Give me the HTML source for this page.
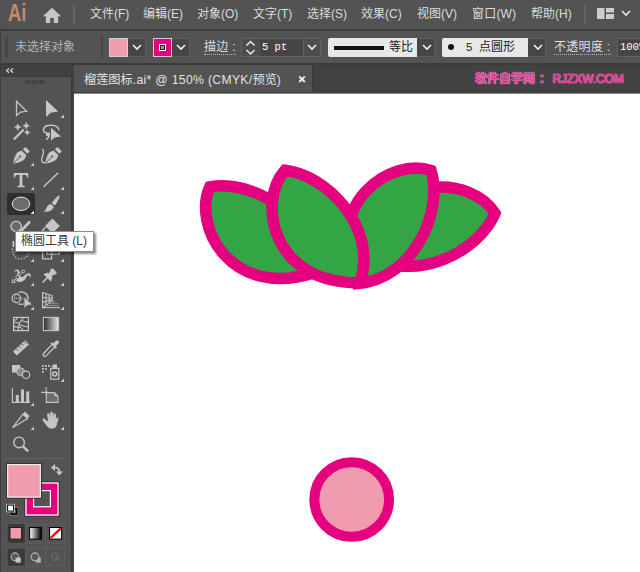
<!DOCTYPE html>
<html lang="zh-CN">
<head>
<meta charset="utf-8">
<title>榴莲图标.ai</title>
<style>
html,body{margin:0;padding:0;}
body{width:640px;height:572px;position:relative;overflow:hidden;background:#fff;font-family:"Liberation Sans","Noto Sans CJK SC",sans-serif;font-size:12px;color:#d8d8d8;}
.abs{position:absolute;}
#menubar{left:0;top:0;width:640px;height:29px;background:#535353;}
#menubar .mi{position:absolute;top:5px;height:19px;line-height:19px;font-size:12px;color:#dcdcdc;white-space:nowrap;}
#sep1{left:0;top:29px;width:640px;height:2px;background:#3e3e3e;}
#ctrl{left:0;top:31px;width:640px;height:32px;background:#535353;}
#sep2{left:0;top:63px;width:640px;height:2px;background:#3b3b3b;}
#tabrow{left:71px;top:65px;width:569px;height:27px;background:#424242;border-left:0}
#tabline{left:74px;top:92px;width:566px;height:1px;background:#3f3f3f;border-bottom:1px solid #8a8a8a;}
#tab{left:74px;top:65px;width:238px;height:27px;background:#535353;border-right:1px solid #3a3a3a;}
#tabtxt{left:84px;top:71px;height:18px;line-height:18px;font-size:12.2px;color:#e2e2e2;white-space:nowrap;}
#tabtxt .ls{letter-spacing:.32px;}
#gap{left:71px;top:65px;width:2px;height:507px;background:#3b3b3b;border-right:1px solid #474747;}
#tools{left:0;top:65px;width:71px;height:507px;background:#535353;}
#toolhead{left:0;top:65px;width:71px;height:11px;background:#404040;}
#toolsep{left:0;top:76px;width:71px;height:1px;background:#3b3b3b;}
#lb{left:0;top:31px;width:1px;height:541px;background:#3e3e3e;}
.lbl{position:absolute;white-space:nowrap;font-size:12px;color:#dedede;}
.dd{position:absolute;top:38px;height:17px;background:#464646;border:1px solid #5e5e5e;border-left:0;border-radius:0 2px 2px 0;box-sizing:content-box;}
.field{position:absolute;top:38px;height:19px;}
#wm span{font-weight:normal;-webkit-text-stroke:.6px #e5389a;margin-left:5.5px;letter-spacing:-.1px}
#wm{left:475px;top:69px;height:20px;line-height:20px;font-size:12px;font-weight:bold;color:#e5389a;white-space:nowrap;text-shadow:0 0 1px #f6b3d6,0 0 1px #f6b3d6;}
#tip{left:15px;top:231px;width:77px;height:19px;background:#fff;border:1px solid #8c8c8c;box-shadow:2px 2px 2px rgba(0,0,0,.45);color:#3c3c3c;font-size:12px;line-height:19px;white-space:nowrap;}
#tip span{position:absolute;left:5px;top:0;}
</style>
</head>
<body>
<!-- canvas artwork -->
<svg class="abs" style="left:74px;top:94px" width="566" height="478" viewBox="74 94 566 478">
<g fill="#33a544" stroke="#e4007f" stroke-width="11.5" stroke-linejoin="miter" stroke-miterlimit="10">
<path id="leaf4" d="M495.0 213.3 C473.4 177.9 390.2 167.1 365.7 252.8 C413.8 286.6 479.4 251.1 495.0 213.3 Z"/>
<path id="leaf3" d="M431.0 170.4 C391.7 157.0 320.8 202.1 357.1 283.6 C415.6 278.7 443.2 209.4 431.0 170.4 Z"/>
<path id="leaf1" d="M209.9 186.8 C192.3 224.4 229.3 299.8 314.3 272.8 C315.8 214.1 250.0 178.9 209.9 186.8 Z"/>
<path id="leaf2" d="M284.9 170.3 C257.2 201.2 270.9 284.1 360.1 282.7 C378.5 226.9 325.6 174.3 284.9 170.3 Z"/>
</g>
<circle cx="351.7" cy="499.5" r="37.35" fill="#f19cae" stroke="#e4007f" stroke-width="10"/>
</svg>

<div id="menubar" class="abs">
<div class="abs" style="left:8px;top:0px;font-size:23.5px;font-weight:bold;color:#c08c69;line-height:27px;transform:scaleX(.78);transform-origin:0 0;">Ai</div>
<svg class="abs" style="left:42px;top:7px" width="20" height="17" viewBox="0 0 20 17"><path d="M10 .8 L19.2 9.2 H16.2 V16 H11.8 V11 H8.2 V16 H3.8 V9.2 H.8Z" fill="#c6c6c6"/></svg>
<div class="abs" style="left:73px;top:5px;width:2px;height:19px;background:#646464"></div>
<div class="mi" style="left:90px">文件(F)</div>
<div class="mi" style="left:143px">编辑(E)</div>
<div class="mi" style="left:197px">对象(O)</div>
<div class="mi" style="left:253px">文字(T)</div>
<div class="mi" style="left:307px">选择(S)</div>
<div class="mi" style="left:361px">效果(C)</div>
<div class="mi" style="left:417px">视图(V)</div>
<div class="mi" style="left:472px;letter-spacing:.2px">窗口(W)</div>
<div class="mi" style="left:531px">帮助(H)</div>
<div class="abs" style="left:584px;top:5px;width:2px;height:19px;background:#646464"></div>
<svg class="abs" style="left:597px;top:8px" width="17" height="11"><rect x="0" y="0" width="7.5" height="11" fill="#cdcdcd"/><rect x="9" y="0" width="8" height="4.5" fill="#cdcdcd"/><rect x="9" y="6" width="8" height="5" fill="#cdcdcd"/></svg>
<svg class="abs" style="left:621px;top:10px" width="10" height="7"><path d="M1 1 L5 5 L9 1" fill="none" stroke="#e6e6e6" stroke-width="1.6"/></svg>
</div>
<div id="sep1" class="abs"></div>

<div id="ctrl" class="abs"></div>
<!-- control bar contents (absolute to page) -->
<svg class="abs" style="left:5px;top:38px" width="4" height="20"><g fill="#3c3c3c"><rect y="0" width="3" height="1"/><rect y="2" width="3" height="1"/><rect y="4" width="3" height="1"/><rect y="6" width="3" height="1"/><rect y="8" width="3" height="1"/><rect y="10" width="3" height="1"/><rect y="12" width="3" height="1"/><rect y="14" width="3" height="1"/><rect y="16" width="3" height="1"/><rect y="18" width="3" height="1"/></g></svg>
<div class="lbl" style="left:15px;top:38px;line-height:18px;color:#b4b4b4">未选择对象</div>
<div class="abs" style="left:101px;top:35px;width:2px;height:24px;background:#474747"></div>
<!-- fill swatch -->
<div class="abs" style="left:109px;top:38px;width:17px;height:17px;background:#f19cae;border:1px solid #cfcfcf"></div>
<div class="dd" style="left:128px;width:17px"></div>
<svg class="abs" style="left:132px;top:44px" width="10" height="7"><path d="M1 1 L5 5 L9 1" fill="none" stroke="#f0f0f0" stroke-width="1.6"/></svg>
<!-- stroke swatch -->
<div class="abs" style="left:153px;top:38px;width:17px;height:17px;background:#e4007f;border:1px solid #cfcfcf"></div>
<div class="abs" style="left:159px;top:44px;width:5px;height:5px;border:1px solid #fff;background:#222;box-shadow:inset 0 0 0 1px #222, inset 0 0 0 3px #999"></div>
<div class="dd" style="left:172px;width:17px"></div>
<svg class="abs" style="left:176px;top:44px" width="10" height="7"><path d="M1 1 L5 5 L9 1" fill="none" stroke="#f0f0f0" stroke-width="1.6"/></svg>
<div class="lbl" style="left:204px;top:38px;line-height:18px;letter-spacing:.3px">描边 :</div>
<div class="abs" style="left:204px;top:54px;width:32px;height:0;border-top:1px dotted #bdbdbd"></div>
<!-- spinner -->
<div class="abs" style="left:241px;top:38px;width:18px;height:17px;border:1px solid #636363;border-radius:2px 0 0 2px;background:#4d4d4d"></div>
<svg class="abs" style="left:245px;top:40px" width="11" height="16"><path d="M1.5 5.5 L5.5 1.5 L9.5 5.5 M1.5 10 L5.5 14 L9.5 10" fill="none" stroke="#ececec" stroke-width="1.5"/></svg>
<div class="abs" style="left:260px;top:38px;width:43px;height:17px;background:#454545;border:1px solid #636363;border-left:0"></div>
<div class="abs" style="left:262px;top:38px;line-height:19px;font-family:'Liberation Mono',monospace;font-size:10.5px;color:#fff;">5 pt</div>
<div class="dd" style="left:304px;width:16px;background:#4d4d4d;border-color:#636363"></div>
<svg class="abs" style="left:307px;top:44px" width="10" height="7"><path d="M1 1 L5 5 L9 1" fill="none" stroke="#f0f0f0" stroke-width="1.6"/></svg>
<!-- profile -->
<div class="abs" style="left:328px;top:38px;width:89px;height:19px;background:#e8e8e8;border-radius:2px 0 0 2px"></div>
<div class="abs" style="left:334px;top:46px;width:50px;height:4px;background:#111"></div>
<div class="abs" style="left:389px;top:38px;line-height:19px;font-size:12px;color:#222">等比</div>
<div class="dd" style="left:417px;width:17px"></div>
<svg class="abs" style="left:422px;top:44px" width="10" height="7"><path d="M1 1 L5 5 L9 1" fill="none" stroke="#f0f0f0" stroke-width="1.6"/></svg>
<!-- brush -->
<div class="abs" style="left:442px;top:38px;width:86px;height:19px;background:#e8e8e8;border-radius:2px 0 0 2px"></div>
<div class="abs" style="left:448px;top:44px;width:6px;height:6px;border-radius:3px;background:#111"></div>
<div class="abs" style="left:466px;top:38px;line-height:19px;font-size:12px;color:#222;white-space:nowrap"><span style="font-size:11.5px">5</span>&nbsp; 点圆形</div>
<div class="dd" style="left:528px;width:17px"></div>
<svg class="abs" style="left:533px;top:44px" width="10" height="7"><path d="M1 1 L5 5 L9 1" fill="none" stroke="#f0f0f0" stroke-width="1.6"/></svg>
<div class="lbl" style="left:554px;top:38px;line-height:18px;letter-spacing:.3px">不透明度 :</div>
<div class="abs" style="left:554px;top:54px;width:57px;height:0;border-top:1px dotted #bdbdbd"></div>
<div class="abs" style="left:617px;top:38px;width:30px;height:17px;background:#454545;border:1px solid #636363;border-radius:2px 0 0 2px"></div>
<div class="abs" style="left:620px;top:38px;line-height:19px;font-family:'Liberation Mono',monospace;font-size:10.5px;color:#fff;white-space:nowrap">100%</div>
<div id="sep2" class="abs"></div>

<div id="tabrow" class="abs"></div>
<div id="tabline" class="abs"></div>
<div id="tab" class="abs"></div>
<div id="tabtxt" class="abs">榴莲图标<span class="ls">.ai* @ 150% (CMYK/</span>预览<span class="ls">)</span></div>
<svg class="abs" style="left:298px;top:75px" width="8" height="8"><path d="M1.2 1.4 L6.8 7 M6.8 1.4 L1.2 7" stroke="#ededed" stroke-width="1.8" fill="none"/></svg>
<div id="wm" class="abs">软件自学网<i style="font-style:normal;position:relative;left:4px">：</i><span>RJZXW.COM</span></div>

<div id="tools" class="abs"></div>
<div id="toolhead" class="abs"></div>
<div id="toolsep" class="abs"></div>
<div id="gap" class="abs"></div>
<div id="lb" class="abs"></div>
<!--TOOLSVG_START--><svg class="abs" style="left:0;top:0" width="74" height="572" viewBox="0 0 74 572">
<defs>
<linearGradient id="gLR" x1="0" x2="1" y1="0" y2="0"><stop offset="0" stop-color="#2a2a2a"/><stop offset="1" stop-color="#e8e8e8"/></linearGradient>
<linearGradient id="gWB" x1="0" x2="1" y1="0" y2="0"><stop offset="0" stop-color="#ffffff"/><stop offset="1" stop-color="#000000"/></linearGradient>
<path id="tri" d="M3.5 0 V3.5 H0Z"/>
</defs>
<!-- header arrows + grip -->
<path d="M9 68.4 L6.6 70.6 L9 72.8 M13 68.4 L10.6 70.6 L13 72.8" fill="none" stroke="#d0d0d0" stroke-width="1.4"/>
<g fill="#3a3a3a"><rect x="26" y="80" width="1" height="4"/><rect x="28" y="80" width="1" height="4"/><rect x="30" y="80" width="1" height="4"/><rect x="32" y="80" width="1" height="4"/><rect x="34" y="80" width="1" height="4"/><rect x="36" y="80" width="1" height="4"/><rect x="38" y="80" width="1" height="4"/><rect x="40" y="80" width="1" height="4"/><rect x="42" y="80" width="1" height="4"/><rect x="44" y="80" width="1" height="4"/></g>
<!-- selected tool bg -->
<rect x="7" y="193" width="28" height="22" rx="2" fill="#2e2e2e"/>
<g fill="#c6c6c6" stroke="none">
<!-- corner triangles -->
<use href="#tri" x="60.5" y="114.5"/>
<use href="#tri" x="30.5" y="162.5"/>
<use href="#tri" x="30.5" y="186.5"/><use href="#tri" x="60.5" y="186.5"/>
<use href="#tri" x="30.5" y="210.5" fill="#e8e8e8"/><use href="#tri" x="60.5" y="210.5"/>
<use href="#tri" x="30.5" y="258.5"/><use href="#tri" x="60.5" y="258.5"/>
<use href="#tri" x="30.5" y="282.5"/><use href="#tri" x="60.5" y="282.5"/>
<use href="#tri" x="30.5" y="306.5"/><use href="#tri" x="60.5" y="306.5"/>
<use href="#tri" x="60.5" y="378.5"/>
<use href="#tri" x="30.5" y="402.5"/>
<use href="#tri" x="30.5" y="426.5"/><use href="#tri" x="60.5" y="426.5"/>
</g>
<!-- row1: selection / direct selection -->
<path d="M16.5 101.3 V115.6 L20.6 112 L26.6 111.3Z" fill="none" stroke="#c6c6c6" stroke-width="1.3" stroke-linejoin="miter"/>
<path d="M46 100 V117 L50.8 112.8 L58.2 111.6Z" fill="#c6c6c6"/>
<!-- row2: magic wand / lasso -->
<path d="M13.8 139.6 L23.8 129.4" stroke="#c6c6c6" stroke-width="2.2" fill="none"/>
<path d="M17.8 123.8 l1 2.3 2.3 1 -2.3 1 -1 2.3 -1 -2.3 -2.3 -1 2.3 -1z M26.2 122.4 l1 2.3 2.3 1 -2.3 1 -1 2.3 -1 -2.3 -2.3 -1 2.3 -1z M27.2 129.8 l.8 1.8 1.8 .8 -1.8 .8 -.8 1.8 -.8 -1.8 -1.8 -.8 1.8 -.8z" fill="#c6c6c6" stroke="#c6c6c6" stroke-width=".5"/>
<path d="M50 133.9 C45.5 133.6 43.2 131.6 43.4 129.7 C43.8 126.6 47.5 125.2 51.4 125.3 C55.8 125.4 59 127.2 58.8 130.4 M48.8 133.3 C49 135.2 47.6 135.8 46.8 134.9 C46 133.8 47.4 132.7 48.8 133.3 C49.6 135.6 48.4 138.2 46 139.6" fill="none" stroke="#c6c6c6" stroke-width="1.6"/>
<path d="M51 127.8 V140.8 L54.6 137.4 L61 136.4Z" fill="#c6c6c6"/>
<!-- row3: pen / curvature -->
<g id="pen"><path d="M13 163.6 C14 158.5 15.2 154.6 17.6 152.2 L21.6 150.4 L26.4 155.2 L24.6 159.2 C22.2 161.6 18.2 162.8 13 163.6Z" fill="#c6c6c6"/><path d="M22.9 149.3 L25.4 146.9 L29.8 151.3 L27.4 153.8Z" fill="#c6c6c6"/><path d="M13.6 163 L19.6 157" stroke="#535353" stroke-width="1" fill="none"/><circle cx="20.1" cy="156.5" r="1" fill="#535353"/></g>
<use href="#pen" x="32" y="0"/>
<path d="M42.2 149 C45.5 151.5 42 156 41.6 159.5 C41.4 162 43.5 163.2 45.4 162.6" fill="none" stroke="#c6c6c6" stroke-width="1.3"/>
<!-- row4: type / line -->
<path d="M13.8 173 H28.2 V177.4 H26.9 C26.8 175.6 26.3 175 24.8 175 H22.4 V184.6 C22.4 185.8 22.9 186 24.6 186 V187.2 H17.4 V186 C19.1 186 19.6 185.8 19.6 184.6 V175 H17.2 C15.7 175 15.2 175.6 15.1 177.4 H13.8Z" fill="#c6c6c6"/>
<path d="M43.6 186.8 L58.2 172.8" stroke="#c6c6c6" stroke-width="1.5" fill="none"/>
<!-- row5: ellipse (selected) / brush -->
<ellipse cx="21" cy="203.8" rx="8.8" ry="6.7" fill="#6c6c6c" stroke="#e4e4e4" stroke-width="1"/>
<path d="M59.3 195.5 C60.4 196.6 57.8 201.4 54.8 205.6 L51.6 203 C54.8 198.8 58.2 194.6 59.3 195.5Z" fill="#c6c6c6"/>
<path d="M50.6 203.9 L53.9 206.6 C53.3 210 49.4 212.3 43.3 211.8 C46.6 210.2 46.2 205.1 50.6 203.9Z" fill="#c6c6c6"/>
<!-- row6: shaper / eraser (mostly hidden) -->
<circle cx="16.2" cy="226.4" r="5.2" fill="#6a6a6a" stroke="#c6c6c6" stroke-width="1.3"/>
<path d="M20.5 231.5 L30 221.5" stroke="#c6c6c6" stroke-width="2.6" fill="none"/>
<path d="M52.4 218.6 L59.8 226 L52.4 233.4 L45 226Z" fill="#c6c6c6"/>
<path d="M45.6 227.2 L42.6 230.2 L44.6 232.2" fill="none" stroke="#c6c6c6" stroke-width="1.3"/>
<!-- row7: rotate / scale (partly hidden) -->
<circle cx="20.8" cy="250.5" r="8.4" fill="none" stroke="#c6c6c6" stroke-width="1.4" stroke-dasharray="1.3 1.7"/>
<path d="M13.4 241 v6" stroke="#c6c6c6" stroke-width="1.6"/>
<rect x="42.6" y="246.5" width="9" height="12.4" fill="none" stroke="#c6c6c6" stroke-width="1.2"/>
<rect x="46.8" y="243.5" width="12.6" height="10.6" fill="none" stroke="#c6c6c6" stroke-width="1.2"/>
<!-- row8: width / puppet pin -->
<path d="M14.2 272.2 C14.4 269.8 16.8 268.6 18.6 270 C20.4 271.6 20 274.4 20.6 276 C21.4 277.6 23.2 276.8 24.6 275.4 C26.2 273.8 28 272.6 29.6 273.4 C31 274.2 31 276.4 30.4 278.4 C30 276.6 29.4 275.2 28.2 275.2 C26.8 275.4 26.4 277.6 25 279.4 C23.2 281.6 19.6 282.6 17.2 281.4 C14.8 280 15.8 277.2 17 275 C18 273.2 17.8 271.2 16.4 271 C15.4 271 15 271.8 14.2 272.2Z" fill="#c6c6c6"/>
<path d="M13.6 281.2 L23 271.6" stroke="#535353" stroke-width="2.2" fill="none"/>
<path d="M13.6 281.2 L23 271.6" stroke="#c6c6c6" stroke-width="1" fill="none"/>
<rect x="12.2" y="280" width="2.6" height="2.6" fill="#535353" stroke="#c6c6c6" stroke-width=".9"/><circle cx="17.5" cy="277.1" r="1.7" fill="#535353" stroke="#c6c6c6" stroke-width=".9"/><circle cx="23.2" cy="271.4" r="1.4" fill="#535353" stroke="#c6c6c6" stroke-width=".9"/>
<g transform="translate(47.6 277.4) rotate(45)" fill="#c6c6c6"><rect x="-3.4" y="-10" width="6.8" height="3.6" rx="1"/><rect x="-2.3" y="-7" width="4.6" height="4"/><path d="M-3.2 -3.4 H3.2 L5.4 .6 H-5.4Z"/><rect x="-.8" y="0" width="1.6" height="7.2"/></g>
<!-- row9: shape builder / perspective grid -->
<path d="M18.6 292.4 A6.7 6.2 0 1 1 18.6 303.8" fill="none" stroke="#c6c6c6" stroke-width="1.3"/><path d="M18.6 292.4 A6.7 6.2 0 0 0 18.6 303.8" fill="none" stroke="#8a8a8a" stroke-width=".9"/>
<ellipse cx="16.3" cy="298.4" rx="4.2" ry="4.3" fill="none" stroke="#c6c6c6" stroke-width="1.2"/>
<path d="M14.2 298.4 h1 m1.1 0 h1 m1.1 0 h1 m1.1 0 h1 m1.1 0 h1" stroke="#c6c6c6" stroke-width="1.1"/>
<path d="M24 296.6 V308.6 L27.4 305.4 L32.6 304.8Z" fill="#c6c6c6" stroke="#535353" stroke-width=".8"/>
<path d="M42.6 292.4 L52.2 295.6 V301 L42.6 307.6Z M46 293.6 V305.3 M49.2 294.6 V303.1 M42.6 297.2 L52.2 298 M42.6 302.2 L52.2 299.6" fill="none" stroke="#c6c6c6" stroke-width="1.1"/>
<path d="M42.6 307.6 H60" fill="none" stroke="#c6c6c6" stroke-width="1.1"/>
<path d="M52.6 300.2 L56 302.2 H50.4Z" fill="#8a8a8a"/><path d="M48.6 303.6 H58 M45.6 305.6 H59.4" stroke="#8f8f8f" stroke-width="1"/>
<!-- row10: mesh / gradient -->
<rect x="13.6" y="317.4" width="14.8" height="13.2" fill="none" stroke="#c6c6c6" stroke-width="1.2"/>
<path d="M24 317.4 C20 321 18 326 18.4 330.6 M13.6 321.8 C16 322.8 18 323.6 20.2 323 M13.6 326.6 C15.5 326.6 17 327 18.6 327.6 M21.6 320.6 C24 321.6 26 322.6 28.4 322 M19.4 325 C22.5 325.4 25.5 327 28.4 327 M17.2 317.4 C17.2 319.4 15.6 320.4 13.6 320 M23 330.6 C22.6 329 21 327.4 19.2 327" fill="none" stroke="#c6c6c6" stroke-width="1.1"/>
<rect x="43.4" y="317.4" width="15.2" height="13.2" fill="url(#gLR)" stroke="#c6c6c6" stroke-width="1.1"/>
<!-- row11: measure / eyedropper -->
<path d="M13 351.4 L25.2 340.2 L29 344.4 L16.8 355.6Z" fill="#c6c6c6"/>
<path d="M16.4 348.6 l2 2.2 M19 346.2 l2 2.2 M21.6 343.8 l2 2.2 M24.2 341.4 l2 2.2" stroke="#535353" stroke-width="1" fill="none"/>
<path d="M52 344.6 L44 353 C43 354.2 43 355.4 43.8 356 C44.6 356.6 45.8 356.2 46.6 355.4 L54.6 347" fill="none" stroke="#c6c6c6" stroke-width="1.3"/>
<path d="M50.4 343.4 L55.8 348.8 L57 347.6 L55.6 346.2 C58.4 344.4 59.6 342.4 58.6 341 C57.4 339.8 55.2 341 53.2 343.6 L51.8 342.2Z" fill="#c6c6c6"/>
<!-- row12: blend / symbol sprayer -->
<rect x="12" y="365" width="8.2" height="7.6" fill="#c6c6c6"/>
<circle cx="20.6" cy="371.8" r="4" fill="#8c8c8c" stroke="#c6c6c6" stroke-width=".8"/>
<circle cx="26" cy="374.8" r="3.7" fill="#535353" stroke="#c6c6c6" stroke-width="1.2"/>
<g fill="#c6c6c6"><rect x="42" y="365" width="1.8" height="1.8"/><rect x="45" y="365" width="1.8" height="1.8"/><rect x="48" y="365" width="1.8" height="1.8"/><rect x="42" y="368" width="1.8" height="1.8"/><rect x="45" y="368" width="1.8" height="1.8"/><rect x="42" y="371" width="1.8" height="1.8"/></g>
<rect x="50.8" y="368.4" width="8" height="10.8" fill="#535353" stroke="#c6c6c6" stroke-width="1.2"/>
<rect x="53" y="364.4" width="4" height="3.6" fill="#c6c6c6"/><rect x="51.6" y="365.8" width="2" height="1.4" fill="#c6c6c6"/>
<circle cx="54.8" cy="374" r="2" fill="none" stroke="#c6c6c6" stroke-width="1.5"/>
<!-- row13: graph / artboard -->
<path d="M12.4 388 V402.4 H30" fill="none" stroke="#c6c6c6" stroke-width="1.2"/>
<rect x="15.8" y="395" width="3" height="7.4" fill="#c6c6c6"/><rect x="21" y="389.4" width="3" height="13" fill="#c6c6c6"/><rect x="26.2" y="391.4" width="3" height="11" fill="#c6c6c6"/>
<path d="M46.2 387 V395 M41.2 392.4 H48" stroke="#c6c6c6" stroke-width="1.1" fill="none"/>
<path d="M46.4 392.6 H54.4 L58 396.2 V402.4 H46.4Z" fill="#6c6c6c" stroke="#c6c6c6" stroke-width="1.1"/>
<path d="M54.4 392.6 V396.2 H58Z" fill="#c6c6c6"/>
<!-- row14: slice / hand -->
<path d="M12.4 427.8 L23.2 414 L27.6 418.6 L12.4 427.8Z" fill="none" stroke="#c6c6c6" stroke-width="1.2"/>
<path d="M22.6 414.4 L25 411.6 L29.6 416 L27.2 418.8Z" fill="#c6c6c6"/>
<path d="M46.8 421 L43.4 418.4 C42.6 419 43 420.2 43.6 421.2 L47.6 426.4 C48.6 427.8 50 428.2 52 428.2 C54.6 428.2 55.6 427.4 56.2 425.6 L58 418.8 C58.2 417.8 56.8 417.4 56.4 418.4 L55.4 421 L55.6 414.6 C55.6 413.4 53.9 413.4 53.8 414.6 L53.4 419.6 L52.4 412.8 C52.2 411.6 50.5 411.8 50.6 413 L50.9 419.6 L49.2 414.2 C48.8 413 47.2 413.6 47.5 414.8 L48.9 422.4Z" fill="#c6c6c6" stroke="#c6c6c6" stroke-width=".8" stroke-linejoin="round"/>
<!-- row15: zoom -->
<circle cx="19.1" cy="442.4" r="5.3" fill="none" stroke="#c6c6c6" stroke-width="1.4"/>
<path d="M23.2 446.6 L28.2 451.4" stroke="#c6c6c6" stroke-width="2.4" fill="none"/>
<!-- separator -->
<rect x="6" y="458" width="60" height="1" fill="#616161"/>
<!-- stroke swatch (behind) -->
<rect x="24.4" y="481.4" width="35.2" height="35.2" fill="#2c2c2c"/>
<rect x="25.3" y="482.3" width="33.4" height="33.4" fill="#fff"/>
<rect x="26.6" y="483.6" width="30.8" height="30.8" fill="#e4007f"/>
<rect x="33" y="490" width="18" height="17.4" fill="#fff"/>
<rect x="34.2" y="491.2" width="15.6" height="15" fill="#535353"/>
<!-- fill swatch -->
<rect x="6.2" y="463.2" width="35.6" height="35.4" fill="#2c2c2c"/>
<rect x="7.1" y="464.1" width="33.8" height="33.6" fill="#fff"/>
<rect x="8.2" y="465.2" width="31.6" height="31.4" fill="#f19cae"/>
<!-- swap arrow -->
<path d="M54 467.4 C58.2 467.2 59.6 469.6 59.4 472.6" fill="none" stroke="#c6c6c6" stroke-width="1.8"/>
<path d="M51 467.4 L55 463.8 V471Z M59.4 475.6 L55.8 471.6 H63Z" fill="#c6c6c6"/>
<!-- default fill/stroke -->
<rect x="10.5" y="508" width="7" height="7" fill="#535353" stroke="#d8d8d8" stroke-width=".8"/>
<rect x="11.2" y="508.7" width="5.6" height="5.6" fill="none" stroke="#000" stroke-width="1.6"/>
<rect x="6.8" y="504.3" width="7.6" height="7.6" fill="#fff" stroke="#d8d8d8" stroke-width=".8"/>
<rect x="7.6" y="505.1" width="6" height="6" fill="#fff" stroke="#000" stroke-width="1"/>
<!-- color mode group -->
<rect x="7.5" y="524" width="57" height="19" rx="2" fill="none" stroke="#5f5f5f" stroke-width="1"/>
<path d="M9.5 524 H25 V543 H9.5 A2 2 0 0 1 7.5 541 V526 A2 2 0 0 1 9.5 524Z" fill="#3a3a3a"/>
<path d="M25.5 524 V543 M45.5 524 V543" stroke="#5f5f5f" stroke-width="1"/>
<rect x="10" y="527.5" width="11.6" height="11.6" fill="#f19cae" stroke="#1e1e1e" stroke-width="1"/>
<rect x="29.6" y="527.5" width="11.8" height="11.6" fill="url(#gWB)" stroke="#000" stroke-width="1"/>
<rect x="49.6" y="527.5" width="12" height="11.6" fill="#fff" stroke="#000" stroke-width="1"/>
<path d="M50.6 538 L60.8 528.4" stroke="#f00" stroke-width="2.4"/>
<!-- draw mode group -->
<rect x="7.5" y="548.5" width="57" height="17.5" rx="2" fill="none" stroke="#5f5f5f" stroke-width="1"/>
<path d="M9.5 548.5 H25 V566 H9.5 A2 2 0 0 1 7.5 564 V550.5 A2 2 0 0 1 9.5 548.5Z" fill="#3a3a3a"/>
<path d="M25.5 548.5 V566 M45.5 548.5 V566" stroke="#5f5f5f" stroke-width="1"/>
<circle cx="15" cy="556.8" r="3.9" fill="#5a5a5a" stroke="#b4b4b4" stroke-width="1.1"/><rect x="15.6" y="557.6" width="5.2" height="5" fill="#c6c6c6"/>
<rect x="35.8" y="557.6" width="5" height="5" fill="#b4b4b4"/><circle cx="35" cy="556.8" r="3.9" fill="#5a5a5a" stroke="#b4b4b4" stroke-width="1.1"/>
<circle cx="55" cy="556.8" r="3.6" fill="none" stroke="#6a6a6a" stroke-width="1.1"/><path d="M55 556.8 h3.6 a3.6 3.6 0 0 1 -3.6 3.6z" fill="#6a6a6a"/>
</svg>
<!--TOOLSVG_END-->
<div id="tip" class="abs"><span>椭圆工具 (L)</span></div>
</body>
</html>
